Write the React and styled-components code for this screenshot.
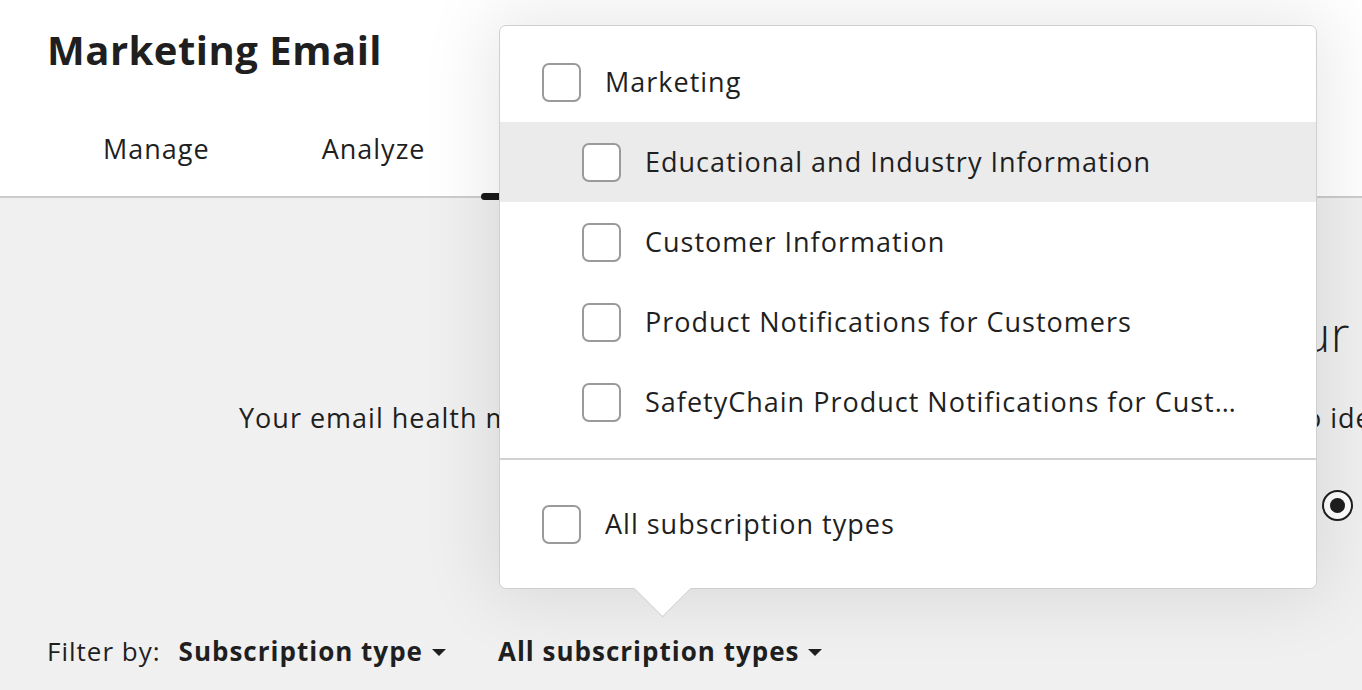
import React from "react";
import styled, { createGlobalStyle } from "styled-components";

const GlobalStyle = createGlobalStyle`
  html, body {
    margin: 0;
    padding: 0;
    background: #f0f0f0;
  }
  body {
    font-family: "Open Sans", "Liberation Sans", sans-serif;
    color: #1f1f1f;
    letter-spacing: 1px;
  }
`;

const Page = styled.div`
  position: relative;
  width: 1362px;
  height: 690px;
  overflow: hidden;
  display: flex;
  flex-direction: column;
  background: #f0f0f0;
`;

const Header = styled.header`
  background: #ffffff;
  border-bottom: 2px solid #cccccc;
  padding: 20px 0 0 47px;
  height: 176px;
  box-sizing: content-box;
  display: flex;
  flex-direction: column;
`;

const Title = styled.h1`
  margin: 0;
  font-size: 40px;
  font-weight: 700;
  line-height: 60px;
  letter-spacing: 0.5px;
`;

const Tabs = styled.nav`
  display: flex;
  margin-top: auto;
`;

const Tab = styled.div`
  position: relative;
  padding: 0 56px 18px;
  height: 78px;
  display: flex;
  align-items: center;
  font-size: 27px;
  font-weight: 400;
  box-sizing: border-box;

  &::after {
    content: "";
    display: ${(p) => (p.active ? "block" : "none")};
    position: absolute;
    left: 0;
    right: 0;
    bottom: -4px;
    height: 7px;
    border-radius: 4px;
    background: #1a1a1a;
  }
`;

const Body = styled.main`
  flex: 1;
  display: flex;
  flex-direction: column;
`;

const Heading = styled.h2`
  margin: 104px 0 0;
  padding-right: 12px;
  text-align: right;
  white-space: nowrap;
  font-size: 48px;
  font-weight: 300;
  line-height: 64px;
  letter-spacing: 0.5px;
`;

const Description = styled.p`
  margin: 32px 0 0;
  padding-left: 239px;
  white-space: nowrap;
  font-size: 27px;
  line-height: 40px;
`;

const RadioRow = styled.div`
  display: flex;
  justify-content: flex-end;
  padding-right: 9px;
  margin-top: 52px;
`;

const Radio = styled.span`
  width: 31px;
  height: 31px;
  border-radius: 50%;
  border: 2.5px solid #1f1f1f;
  box-sizing: border-box;
  background: #ffffff;
  display: flex;
  align-items: center;
  justify-content: center;

  &::before {
    content: "";
    width: 15px;
    height: 15px;
    border-radius: 50%;
    background: #1f1f1f;
  }
`;

const FilterRow = styled.div`
  display: flex;
  align-items: center;
  padding-left: 47px;
  margin-top: auto;
  margin-bottom: 19px;
  font-size: 26px;
  line-height: 40px;
`;

const FilterLabel = styled.span`
  margin-right: 18px;
`;

const FilterButton = styled.span`
  display: inline-flex;
  align-items: center;
  gap: 9px;
  font-weight: 700;
  margin-right: ${(p) => p.gap || 0}px;
`;

const Caret = styled.span`
  width: 0;
  height: 0;
  border-left: 7px solid transparent;
  border-right: 7px solid transparent;
  border-top: 7px solid #1f1f1f;
  margin-top: 2px;
`;

const Dropdown = styled.div`
  position: absolute;
  left: 499px;
  top: 25px;
  width: 818px;
  box-sizing: border-box;
  background: #ffffff;
  border: 1.5px solid #cfcfcf;
  border-radius: 7px;
  box-shadow: 0 0 70px 12px rgba(0, 0, 0, 0.09);
  z-index: 2;
`;

const Arrow = styled.span`
  position: absolute;
  left: 142px;
  bottom: -21px;
  width: 40px;
  height: 40px;
  background: #ffffff;
  border-right: 1.5px solid #cfcfcf;
  border-bottom: 1.5px solid #cfcfcf;
  transform: rotate(45deg);
`;

const Section = styled.div`
  position: relative;
  padding: ${(p) => p.pad};
  border-top: ${(p) => (p.divided ? "2px solid #d2d2d2" : "none")};
  z-index: 1;
`;

const Option = styled.label`
  display: flex;
  align-items: center;
  gap: 24px;
  height: 80px;
  padding-left: ${(p) => (p.nested ? 82 : 42)}px;
  padding-right: 72px;
  background: ${(p) => (p.hover ? "#ebebeb" : "transparent")};
  font-size: 27px;
  cursor: pointer;
`;

const Box = styled.span`
  flex: none;
  width: 39px;
  height: 39px;
  box-sizing: border-box;
  border: 2px solid #9a9a9a;
  border-radius: 7px;
  background: #ffffff;
`;

const OptionText = styled.span`
  white-space: nowrap;
  overflow: hidden;
  text-overflow: ellipsis;
  min-width: 0;
  margin-top: -2px;
`;

const subTypes = [
  "Educational and Industry Information",
  "Customer Information",
  "Product Notifications for Customers",
  "SafetyChain Product Notifications for Customers",
];

const App = () => {
  return (
    <Page>
      <GlobalStyle />
      <Header>
        <Title>Marketing Email</Title>
        <Tabs>
          <Tab>Manage</Tab>
          <Tab>Analyze</Tab>
          <Tab active>Health</Tab>
        </Tabs>
      </Header>
      <Body>
        <Heading>Get a quick check-up on your</Heading>
        <Description>
          Your email health metrics show how your sending practices are doing overall, to identify issues
        </Description>
        <RadioRow>
          <Radio />
        </RadioRow>
        <FilterRow>
          <FilterLabel>Filter by:</FilterLabel>
          <FilterButton gap={52}>
            Subscription type <Caret />
          </FilterButton>
          <FilterButton>
            All subscription types <Caret />
          </FilterButton>
        </FilterRow>
      </Body>
      <Dropdown>
        <Section pad="16px 0">
          <Option>
            <Box />
            <OptionText>Marketing</OptionText>
          </Option>
          {subTypes.map((t, i) => (
            <Option nested hover={i === 0} key={t}>
              <Box />
              <OptionText>{t}</OptionText>
            </Option>
          ))}
        </Section>
        <Section divided pad="24px 0">
          <Option>
            <Box />
            <OptionText>All subscription types</OptionText>
          </Option>
        </Section>
        <Arrow />
      </Dropdown>
    </Page>
  );
};

export default App;
